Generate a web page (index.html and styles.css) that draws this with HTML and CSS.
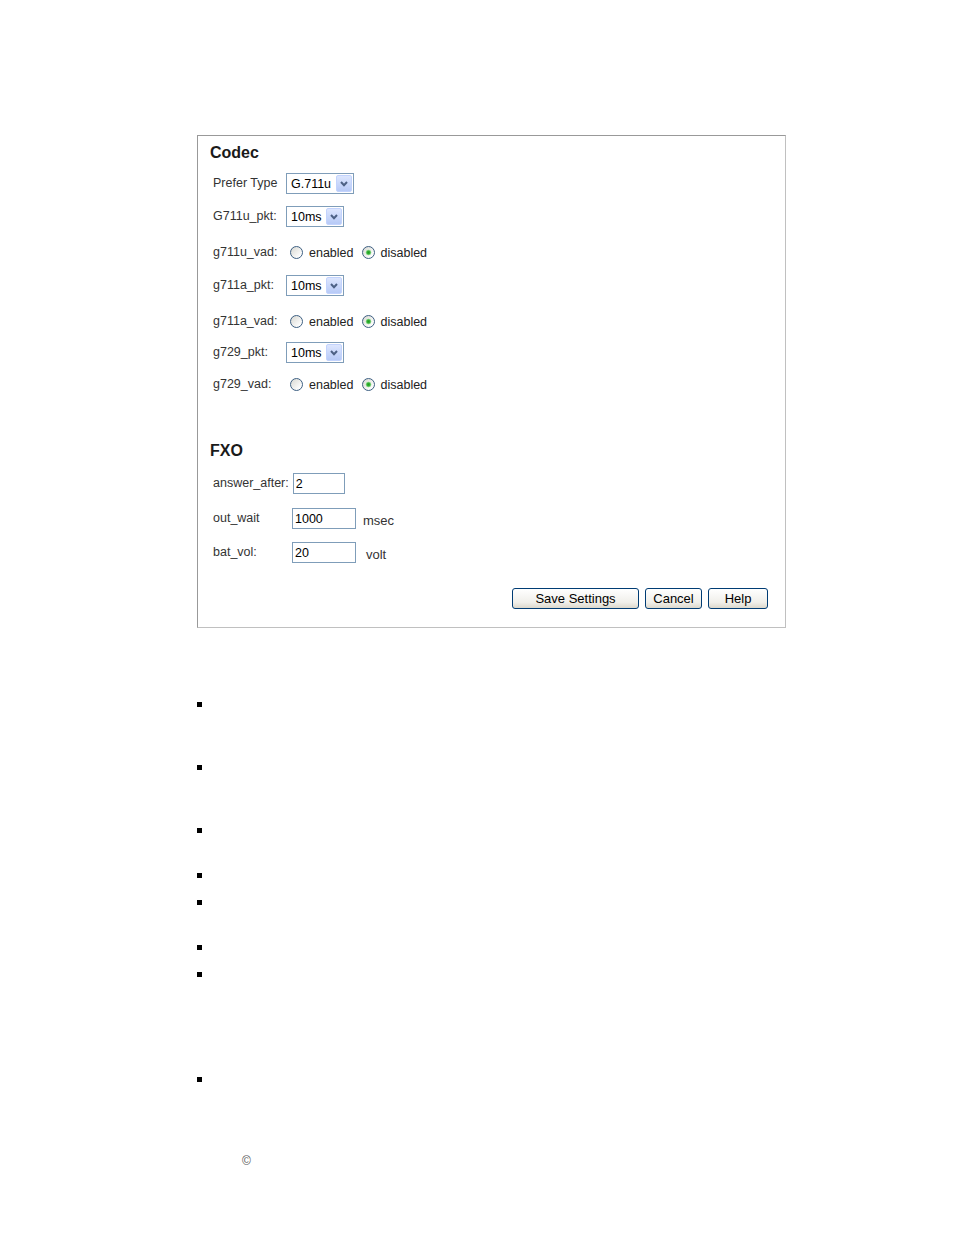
FILE: index.html
```html
<!DOCTYPE html>
<html>
<head>
    <title>Codec / FXO Settings</title>
    <link rel="stylesheet" href="styles.css">
</head>
<body>
    <div class="page">
        <form class="panel" id="settingsForm">
            <h2 class="section-title">Codec</h2>

            <div class="row">
                <label class="row-label" for="prefer_type">Prefer Type</label>
                <span class="select select-wide">
                    <select id="prefer_type">
                        <option>G.711u</option>
                        <option>G.711a</option>
                        <option>G.729</option>
                    </select>
                    <span class="arrow"><svg width="8" height="6" viewBox="0 0 8 6"><path d="M1 1 L4 4.2 L7 1" fill="none" stroke="#4d6185" stroke-width="2"/></svg></span>
                </span>
            </div>

            <div class="row">
                <label class="row-label" for="g711u_pkt">G711u_pkt:</label>
                <span class="select">
                    <select id="g711u_pkt">
                        <option>10ms</option>
                        <option>20ms</option>
                        <option>30ms</option>
                    </select>
                    <span class="arrow"><svg width="8" height="6" viewBox="0 0 8 6"><path d="M1 1 L4 4.2 L7 1" fill="none" stroke="#4d6185" stroke-width="2"/></svg></span>
                </span>
            </div>

            <div class="row row-vad">
                <span class="row-label">g711u_vad:</span>
                <label class="choice"><input type="radio" class="radio" name="g711u_vad" value="1">enabled</label>
                <label class="choice"><input type="radio" class="radio" name="g711u_vad" value="0" checked>disabled</label>
            </div>

            <div class="row">
                <label class="row-label" for="g711a_pkt">g711a_pkt:</label>
                <span class="select">
                    <select id="g711a_pkt">
                        <option>10ms</option>
                        <option>20ms</option>
                        <option>30ms</option>
                    </select>
                    <span class="arrow"><svg width="8" height="6" viewBox="0 0 8 6"><path d="M1 1 L4 4.2 L7 1" fill="none" stroke="#4d6185" stroke-width="2"/></svg></span>
                </span>
            </div>

            <div class="row row-vad">
                <span class="row-label">g711a_vad:</span>
                <label class="choice"><input type="radio" class="radio" name="g711a_vad" value="1">enabled</label>
                <label class="choice"><input type="radio" class="radio" name="g711a_vad" value="0" checked>disabled</label>
            </div>

            <div class="row row-tight">
                <label class="row-label" for="g729_pkt">g729_pkt:</label>
                <span class="select">
                    <select id="g729_pkt">
                        <option>10ms</option>
                        <option>20ms</option>
                        <option>30ms</option>
                    </select>
                    <span class="arrow"><svg width="8" height="6" viewBox="0 0 8 6"><path d="M1 1 L4 4.2 L7 1" fill="none" stroke="#4d6185" stroke-width="2"/></svg></span>
                </span>
            </div>

            <div class="row row-tight-vad">
                <span class="row-label">g729_vad:</span>
                <label class="choice"><input type="radio" class="radio" name="g729_vad" value="1">enabled</label>
                <label class="choice"><input type="radio" class="radio" name="g729_vad" value="0" checked>disabled</label>
            </div>

            <h2 class="section-title section-fxo">FXO</h2>

            <div class="row row-fxo">
                <label class="row-label" for="answer_after">answer_after:</label>
                <input type="text" class="text-input input-short" id="answer_after" value="2">
            </div>

            <div class="row row-fxo row-fxo-next">
                <label class="row-label" for="out_wait">out_wait</label>
                <input type="text" class="text-input" id="out_wait" value="1000">
                <span class="unit unit-msec">msec</span>
            </div>

            <div class="row row-fxo">
                <label class="row-label" for="bat_vol">bat_vol:</label>
                <input type="text" class="text-input" id="bat_vol" value="20">
                <span class="unit unit-volt">volt</span>
            </div>

            <div class="actions">
                <button type="button" class="btn btn-save">Save Settings</button>
                <button type="reset" class="btn btn-cancel">Cancel</button>
                <button type="button" class="btn btn-help">Help</button>
            </div>
        </form>

        <ul class="notes">
            <li></li>
            <li class="gap-m"></li>
            <li class="gap-m"></li>
            <li class="gap-s"></li>
            <li></li>
            <li class="gap-s"></li>
            <li></li>
            <li class="gap-l"></li>
        </ul>

        <p class="copyright">&copy;</p>
    </div>
</body>
</html>
```

FILE: styles.css
```css
/* Codec / FXO settings page */
body {
    margin: 0;
    font-family: "Liberation Sans", Arial, sans-serif;
    color: #333;
    background: #fff;
}
.page {
    padding: 135px 0 0 197px;
}
.panel {
    box-sizing: border-box;
    width: 589px;
    margin: 0;
    padding: 0 17px 18px 12px;
    border: 1px solid;
    border-color: #999 #c0c0c0 #c0c0c0 #999;
}
.section-title {
    margin: 8px 0 0 0;
    font-size: 16px;
    line-height: 18px;
    font-weight: bold;
    color: #1a1a1a;
}
.section-fxo {
    margin-top: 47px;
}
.row {
    display: flex;
    align-items: center;
    height: 21px;
    margin: 12px 0 0 3px;
    font-size: 12.5px;
}
.section-title + .row {
    margin-top: 11px;
}
.row-vad {
    margin-top: 15px;
}
.row-tight {
    margin-top: 10px;
}
.row-tight-vad {
    margin-top: 11px;
}
.row-label {
    flex-shrink: 0;
    width: 73px;
    white-space: nowrap;
    margin-top: -1px;
}

/* select box, XP look */
.select {
    display: inline-flex;
    align-items: center;
    box-sizing: border-box;
    height: 21px;
    border: 1px solid #7f9db9;
    background: #fff;
}
.select select {
    appearance: none;
    -webkit-appearance: none;
    width: 39px;
    height: 19px;
    margin: 0;
    padding: 0 0 0 4px;
    border: 0;
    background: transparent;
    font-family: "Liberation Sans", Arial, sans-serif;
    font-size: 12.5px;
    color: #000;
    outline: none;
}
.select-wide select {
    width: 49px;
}
.arrow {
    display: flex;
    align-items: center;
    justify-content: center;
    box-sizing: border-box;
    width: 16px;
    height: 17px;
    margin-right: 1px;
    border: 1px solid #c3d3fd;
    border-radius: 2px;
    background: linear-gradient(#dde6fe, #b7caf7);
}

/* radios */
.choice {
    display: flex;
    align-items: center;
    gap: 6px;
    font-size: 12.5px;
    color: #222;
}
.choice + .choice {
    margin-left: 8px;
}
.row-vad .choice:first-of-type,
.row-tight-vad .choice:first-of-type {
    margin-left: 4px;
}
.radio {
    appearance: none;
    -webkit-appearance: none;
    box-sizing: border-box;
    width: 13px;
    height: 13px;
    margin: 0;
    border: 1px solid #3d5f82;
    border-radius: 50%;
    background: linear-gradient(135deg, #d8d8d2, #fff 85%);
}
.radio:checked {
    background: radial-gradient(circle, #1f9e1f 0, #37b337 1.6px, #a6e0a6 2.6px, rgba(255,255,255,0) 3.2px),
                linear-gradient(135deg, #d8d8d2, #fff 85%);
}

/* FXO */
.row-fxo {
    margin-top: 13px;
    column-gap: 4px;
}
.section-fxo + .row-fxo {
    margin-top: 13px;
}
.row-fxo-next {
    margin-top: 14px;
}
.row-fxo .row-label {
    width: auto;
    min-width: 75px;
}
.text-input {
    box-sizing: border-box;
    width: 64px;
    height: 21px;
    margin: 0;
    padding: 0 2px;
    border: 1px solid #7f9db9;
    font-family: "Liberation Sans", Arial, sans-serif;
    font-size: 12.5px;
    color: #000;
}
.input-short {
    width: 52px;
}
.unit {
    padding-top: 4px;
    font-size: 13px;
}
.unit-msec {
    margin-left: 3px;
}
.unit-volt {
    margin-left: 6px;
}

/* buttons */
.actions {
    display: flex;
    justify-content: flex-end;
    gap: 6px;
    margin-top: 25px;
}
.btn {
    box-sizing: border-box;
    height: 21px;
    padding: 0;
    border: 1px solid #003c74;
    border-radius: 3px;
    background: linear-gradient(#ffffff, #f0efea 70%, #dcd8cc);
    font-family: "Liberation Sans", Arial, sans-serif;
    font-size: 13px;
    color: #000;
    cursor: pointer;
}
.btn-save {
    width: 127px;
}
.btn-cancel {
    width: 57px;
}
.btn-help {
    width: 60px;
}

/* notes below the panel */
.notes {
    list-style: none;
    margin: 63px 0 0 0;
    padding: 0;
}
.notes li {
    display: flex;
    align-items: center;
    height: 27px;
}
.notes li::before {
    content: "";
    width: 5px;
    height: 5px;
    background: #000;
}
.notes .gap-s {
    margin-top: 18px;
}
.notes .gap-m {
    margin-top: 36px;
}
.notes .gap-l {
    margin-top: 78px;
}
.copyright {
    margin: 61px 0 0 45px;
    font-size: 12px;
    line-height: 14px;
    color: #555;
}
```
